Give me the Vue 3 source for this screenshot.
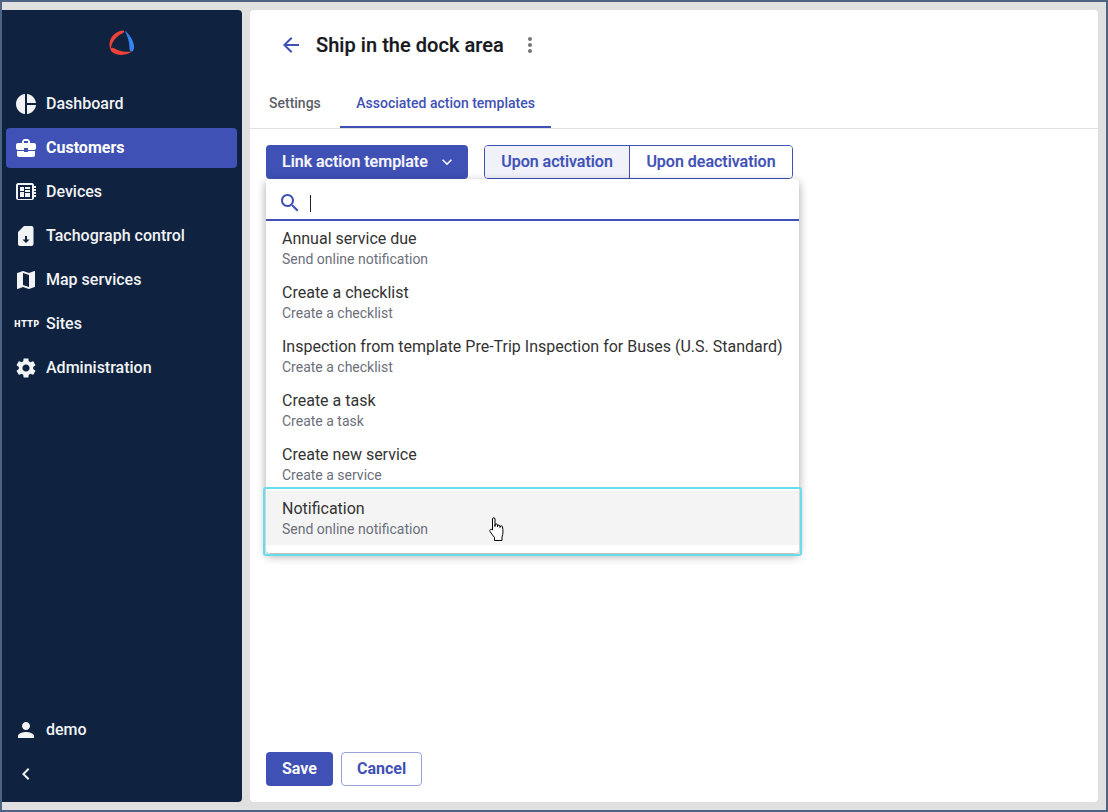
<script setup>
const ICONS = {
  pie: 'M11 2v20c-5.07-.5-9-4.79-9-10s3.93-9.5 9-10zm2.03 0v8.99H22c-.47-4.74-4.24-8.52-8.97-8.99zm0 11.01V22c4.74-.47 8.5-4.25 8.97-8.99h-8.97z',
  case: 'M10 16v-1H3.01L3 19c0 1.11.89 2 2 2h14c1.11 0 2-.89 2-2v-4h-7v1h-4zm10-9h-4.01V5l-2-2h-4l-2 2v2H4c-1.1 0-2 .9-2 2v3c0 1.11.89 2 2 2h6v-2h4v2h6c1.1 0 2-.9 2-2V9c0-1.1-.9-2-2-2zm-6 0h-4V5h4v2z',
  device: 'M4 3h14c1 0 2 1 2 2v1h2v2h-2v1h2v2h-2v1h2v2h-2v1h2v2h-2v1c0 1-1 2-2 2H4c-1 0-2-1-2-2V5c0-1 1-2 2-2zm0 2v14h14V5H4zm2 2h4v4H6V7zm0 5h4v5H6v-5zm5-5h5v2h-5V7zm0 3h5v2h-5v-2zm0 3h5v4h-5v-4z',
  tacho: 'M17.5 2H10L4 8v12c0 1.1.9 2 2 2h11.500c1.100 0 2-.9 2-2V4c0-1.100-.9-2-2-2zM11 12h2v3.500h2.500L12 19l-3.500-3.500H11V12z',
  map: 'M20.5 3l-.16.03L15 5.1 9 3 3.36 4.9c-.21.07-.36.25-.36.48V20.5c0 .28.22.5.5.5l.16-.03L9 18.9l6 2.1 5.64-1.9c.21-.07.36-.25.36-.48V3.5c0-.28-.22-.5-.5-.5zM15 19l-6-2.11V5l6 2.11V19z',
  gear: 'M19.14 12.94c.04-.3.06-.61.06-.94 0-.32-.02-.64-.07-.94l2.03-1.58c.18-.14.23-.41.12-.61l-1.92-3.32c-.12-.22-.37-.29-.59-.22l-2.39.96c-.5-.38-1.03-.7-1.62-.94l-.36-2.54c-.04-.24-.24-.41-.48-.41h-3.84c-.24 0-.43.17-.47.41l-.36 2.54c-.59.24-1.13.57-1.62.94l-2.39-.96c-.22-.08-.47 0-.59.22L2.74 8.87c-.12.21-.08.47.12.61l2.03 1.58c-.05.3-.09.63-.09.94s.02.64.07.94l-2.03 1.58c-.18.14-.23.41-.12.61l1.92 3.32c.12.22.37.29.59.22l2.39-.96c.5.38 1.03.7 1.62.94l.36 2.54c.05.24.24.41.48.41h3.84c.24 0 .44-.17.47-.41l.36-2.54c.59-.24 1.13-.56 1.62-.94l2.39.96c.22.08.47 0 .59-.22l1.92-3.32c.12-.22.07-.47-.12-.61l-2.01-1.58zM12 15.6c-1.98 0-3.6-1.62-3.6-3.6s1.62-3.6 3.6-3.6 3.6 1.62 3.6 3.6-1.62 3.6-3.6 3.6z',
  person: 'M12 12c2.21 0 4-1.79 4-4s-1.79-4-4-4-4 1.79-4 4 1.79 4 4 4zm0 2c-2.67 0-8 1.34-8 4v2h16v-2c0-2.66-5.33-4-8-4z',
  left: 'M15.41 7.41L14 6l-6 6 6 6 1.41-1.41L10.83 12z',
  back: 'M20 11H7.83l5.59-5.59L12 4l-8 8 8 8 1.41-1.41L7.83 13H20v-2z',
  more: 'M12 8c1.1 0 2-.9 2-2s-.9-2-2-2-2 .9-2 2 .9 2 2 2zm0 2c-1.1 0-2 .9-2 2s.9 2 2 2 2-.9 2-2-.9-2-2-2zm0 6c-1.1 0-2 .9-2 2s.9 2 2 2 2-.9 2-2-.9-2-2-2z',
  search: 'M15.5 14h-.79l-.28-.27C15.41 12.59 16 11.11 16 9.5 16 5.91 13.09 3 9.5 3S3 5.91 3 9.5 5.91 16 9.5 16c1.61 0 3.09-.59 4.23-1.57l.27.28v.79l5 4.99L20.49 19l-4.99-5zm-6 0C7.01 14 5 11.99 5 9.5S7.01 5 9.5 5 14 7.01 14 9.5 11.99 14 9.5 14z',
  down: 'M7.41 8.59L12 13.17l4.59-4.58L18 10l-6 6-6-6 1.41-1.41z',
}

const nav = [
  { label: 'Dashboard', icon: 'pie' },
  { label: 'Customers', icon: 'case', active: true },
  { label: 'Devices', icon: 'device' },
  { label: 'Tachograph control', icon: 'tacho' },
  { label: 'Map services', icon: 'map' },
  { label: 'Sites', http: true },
  { label: 'Administration', icon: 'gear' },
]

const options = [
  { title: 'Annual service due', sub: 'Send online notification' },
  { title: 'Create a checklist', sub: 'Create a checklist' },
  { title: 'Inspection from template Pre-Trip Inspection for Buses (U.S. Standard)', sub: 'Create a checklist' },
  { title: 'Create a task', sub: 'Create a task' },
  { title: 'Create new service', sub: 'Create a service' },
  { title: 'Notification', sub: 'Send online notification', hover: true },
]
</script>

<template>
  <div class="frame">
    <aside class="sidebar">
      <div class="logo">
        <svg width="26" height="26" viewBox="0 0 26 26">
          <path fill="#ee4137" d="M14.300 .5C8 .6 1.200 6 .5 13.500c-.2 2.600.2 4.600 1.300 5.600C2.500 12 7 6.500 13.800 3.300c1.600-.8 1.700-2.700.5-2.800z" />
          <path fill="#ee4137" d="M1.500 18.500c1-1.200 3-.6 5.500.8 5 2.300 10.500 3 16 2.300-4.500 3.300-10.500 4-15.500 2.600-3.500-1-6.800-3.700-6-5.700z" />
          <path fill="#3584f0" d="M15.500 .8c4.500 3 9 9 9.500 15.200.2 3-.7 5.600-2.400 5.600-1.500 0-2.100-1.500-2.100-3.600C20.500 12.500 18.800 6 15.500 .8z" />
        </svg>
      </div>
      <nav class="nav">
        <div v-for="item in nav" :key="item.label" class="nav-item" :class="{ active: item.active }">
          <span v-if="item.http" class="http">HTTP</span>
          <svg v-else class="icon" width="24" height="24" viewBox="0 0 24 24"><path fill="currentColor" fill-rule="evenodd" :d="ICONS[item.icon]" /></svg>
          <span class="nav-label">{{ item.label }}</span>
        </div>
      </nav>
      <div class="nav bottom">
        <div class="nav-item">
          <svg class="icon" width="24" height="24" viewBox="0 0 24 24"><path fill="currentColor" :d="ICONS.person" /></svg>
          <span class="nav-label">demo</span>
        </div>
        <div class="nav-item">
          <svg class="icon" width="24" height="24" viewBox="0 0 24 24"><path fill="currentColor" :d="ICONS.left" /></svg>
        </div>
      </div>
    </aside>

    <main class="main">
      <header class="header">
        <svg class="back" width="24" height="24" viewBox="0 0 24 24"><path fill="currentColor" :d="ICONS.back" /></svg>
        <h1 class="title">Ship in the dock area</h1>
        <svg class="more" width="24" height="24" viewBox="0 0 24 24"><path fill="currentColor" :d="ICONS.more" /></svg>
      </header>

      <div class="tabs">
        <div class="tab">Settings</div>
        <div class="tab active">Associated action templates</div>
      </div>

      <section class="content">
        <div class="toolbar">
          <div class="link-wrap">
            <button class="btn primary link-btn">
              <span>Link action template</span>
              <svg class="chev" width="20" height="20" viewBox="0 0 24 24"><path fill="currentColor" :d="ICONS.down" /></svg>
            </button>
            <div class="menu">
              <div class="search">
                <svg class="search-icon" width="24" height="24" viewBox="0 0 24 24"><path fill="currentColor" :d="ICONS.search" /></svg>
                <span class="caret"></span>
              </div>
              <div class="options">
                <div v-for="o in options" :key="o.title" class="option" :class="{ hover: o.hover }">
                  <div class="opt-title">{{ o.title }}</div>
                  <div class="opt-sub">{{ o.sub }}</div>
                </div>
              </div>
              <div class="ring"></div>
              <svg class="hand" width="17" height="25" viewBox="0 0 17 25">
                <path fill="#fff" stroke="#000" stroke-width="1" stroke-linejoin="round" d="M3.500 2c0-1.700 2.500-1.700 2.500 0v7.500V8c0-1.500 2.500-1.500 2.500 0v2-.8c0-1.500 2.500-1.500 2.500 0v1.300-.6c0-1.400 2.500-1.400 2.500 0 .6 3.500.8 7-.5 10.100v3.500H5.500v-3C4 18.500 2.500 16.800 1 14.500c-1-1.800 1-3 2.500-1.500V2z" />
              </svg>
            </div>
          </div>
          <div class="toggle">
            <button class="seg on">Upon activation</button>
            <button class="seg">Upon deactivation</button>
          </div>
        </div>
      </section>

      <footer class="footer">
        <button class="btn primary">Save</button>
        <button class="btn ghost">Cancel</button>
      </footer>
    </main>
  </div>
</template>

<style>
html, body { margin: 0; padding: 0; overflow: hidden; }
</style>

<style scoped>
.frame {
  box-sizing: border-box;
  width: 1108px;
  height: 812px;
  display: flex;
  gap: 8px;
  padding: 8px 8px 8px 0;
  border: 2px solid #4d6384;
  background: #e0e0e0;
  font-family: Roboto, "Liberation Sans", sans-serif;
}
.sidebar {
  width: 240px;
  flex: none;
  display: flex;
  flex-direction: column;
  background: #0f2340;
  border-radius: 0 4px 4px 0;
  padding: 20px 5px 8px 4px;
  box-sizing: border-box;
  color: #f2f3f5;
}
.logo { height: 26px; display: flex; justify-content: center; margin: 0 0 28px; padding-left: 1px; }
.logo svg { display: block; }
.nav { display: flex; flex-direction: column; gap: 4px; }
.bottom { margin-top: auto; }
.nav-item {
  height: 40px;
  display: flex;
  align-items: center;
  gap: 8px;
  padding-left: 8px;
  border-radius: 4px;
  font-size: 16px;
  font-weight: 500;
}
.nav-label { padding-bottom: 2px; }
.nav-item.active { background: #3f51b5; color: #fff; font-weight: 700; }
.icon { flex: none; display: block; }
.http {
  width: 24px;
  flex: none;
  text-align: center;
  font-family: "DejaVu Sans", sans-serif;
  font-size: 8px;
  font-weight: 700;
  letter-spacing: .5px;
  color: #fff;
}
.main {
  flex: 1;
  min-width: 0;
  display: flex;
  flex-direction: column;
  background: #fff;
  border-radius: 4px;
}
.header {
  height: 70px;
  box-sizing: border-box;
  display: flex;
  align-items: center;
  padding-left: 29px;
}
.back { color: #3f51b5; margin-right: 13px; }
.title { margin: 0; font-size: 20px; font-weight: 500; letter-spacing: .05px; -webkit-text-stroke: .2px #17191f; color: #17191f; }
.more { color: #757575; margin-left: 14px; }
.tabs {
  display: flex;
  gap: 3px;
  height: 48px;
  padding-left: 3px;
  border-bottom: 1px solid #e0e0e0;
}
.tab {
  padding: 0 16px 2px;
  display: flex;
  align-items: center;
  font-size: 14px;
  font-weight: 500;
  color: #5c6168;
  box-sizing: border-box;
}
.tab.active { color: #3f51b5; border-bottom: 2px solid #3f51b5; padding: 0 16.500px; }
.content { flex: 1; padding: 16px; }
.toolbar { display: flex; gap: 16px; }
.link-wrap { position: relative; }
.btn {
  height: 34px;
  box-sizing: border-box;
  border-radius: 4px;
  border: 1px solid transparent;
  font-family: inherit;
  font-size: 16px;
  font-weight: 700;
  padding: 0 15px 2px;
  display: flex;
  align-items: center;
  white-space: nowrap;
}
.primary { background: #3f51b5; color: #f7f8fc; }
.ghost { background: #fff; color: #3f51b5; border-color: #98a3dc; }
.link-btn { width: 202px; gap: 9px; font-weight: 500; -webkit-text-stroke: .2px #f7f8fc; }
.chev { margin-top: 2px; flex: none; }
.toggle {
  display: flex;
  height: 34px;
  box-sizing: border-box;
  border: 1px solid #3f51b5;
  border-radius: 4px;
  overflow: hidden;
}
.seg {
  border: 0;
  background: #fff;
  color: #3f51b5;
  font-family: inherit;
  font-size: 16px;
  font-weight: 500;
  -webkit-text-stroke: .2px #3f51b5;
  padding: 0 0 2px;
  height: 100%;
}
.seg.on { width: 145px; background: #f0f1f9; border-right: 1px solid #3f51b5; }
.seg:not(.on) { width: 162px; }
.menu {
  position: absolute;
  top: 34px;
  left: 0;
  width: 533px;
  background: #fff;
  border-radius: 4px;
  box-shadow: 0 3px 10px rgba(0, 0, 0, .36);
  z-index: 2;
  padding-bottom: 8px;
}
.search {
  height: 42px;
  box-sizing: border-box;
  border-bottom: 2px solid #3f51b5;
  display: flex;
  align-items: center;
  padding: 8px 0 0 12px;
}
.search-icon { color: #3f51b5; margin-right: 8px; }
.caret { width: 1px; height: 17px; background: #222; }
.option {
  height: 54px;
  box-sizing: border-box;
  padding: 8px 16px;
}
.option.hover { background: #f4f4f4; }
.opt-title { font-size: 16px; line-height: 20px; color: #333; white-space: nowrap; }
.opt-sub { font-size: 14px; line-height: 20px; color: #6c6f7b; white-space: nowrap; }
.ring {
  position: absolute;
  left: -3px;
  right: -3px;
  top: 308px;
  height: 69px;
  box-sizing: border-box;
  border: 2px solid #66dcec;
  border-radius: 3px;
  pointer-events: none;
}
.hand { position: absolute; left: 223px; top: 338px; pointer-events: none; }
.footer { display: flex; gap: 8px; padding: 0 16px 16px; }
</style>
